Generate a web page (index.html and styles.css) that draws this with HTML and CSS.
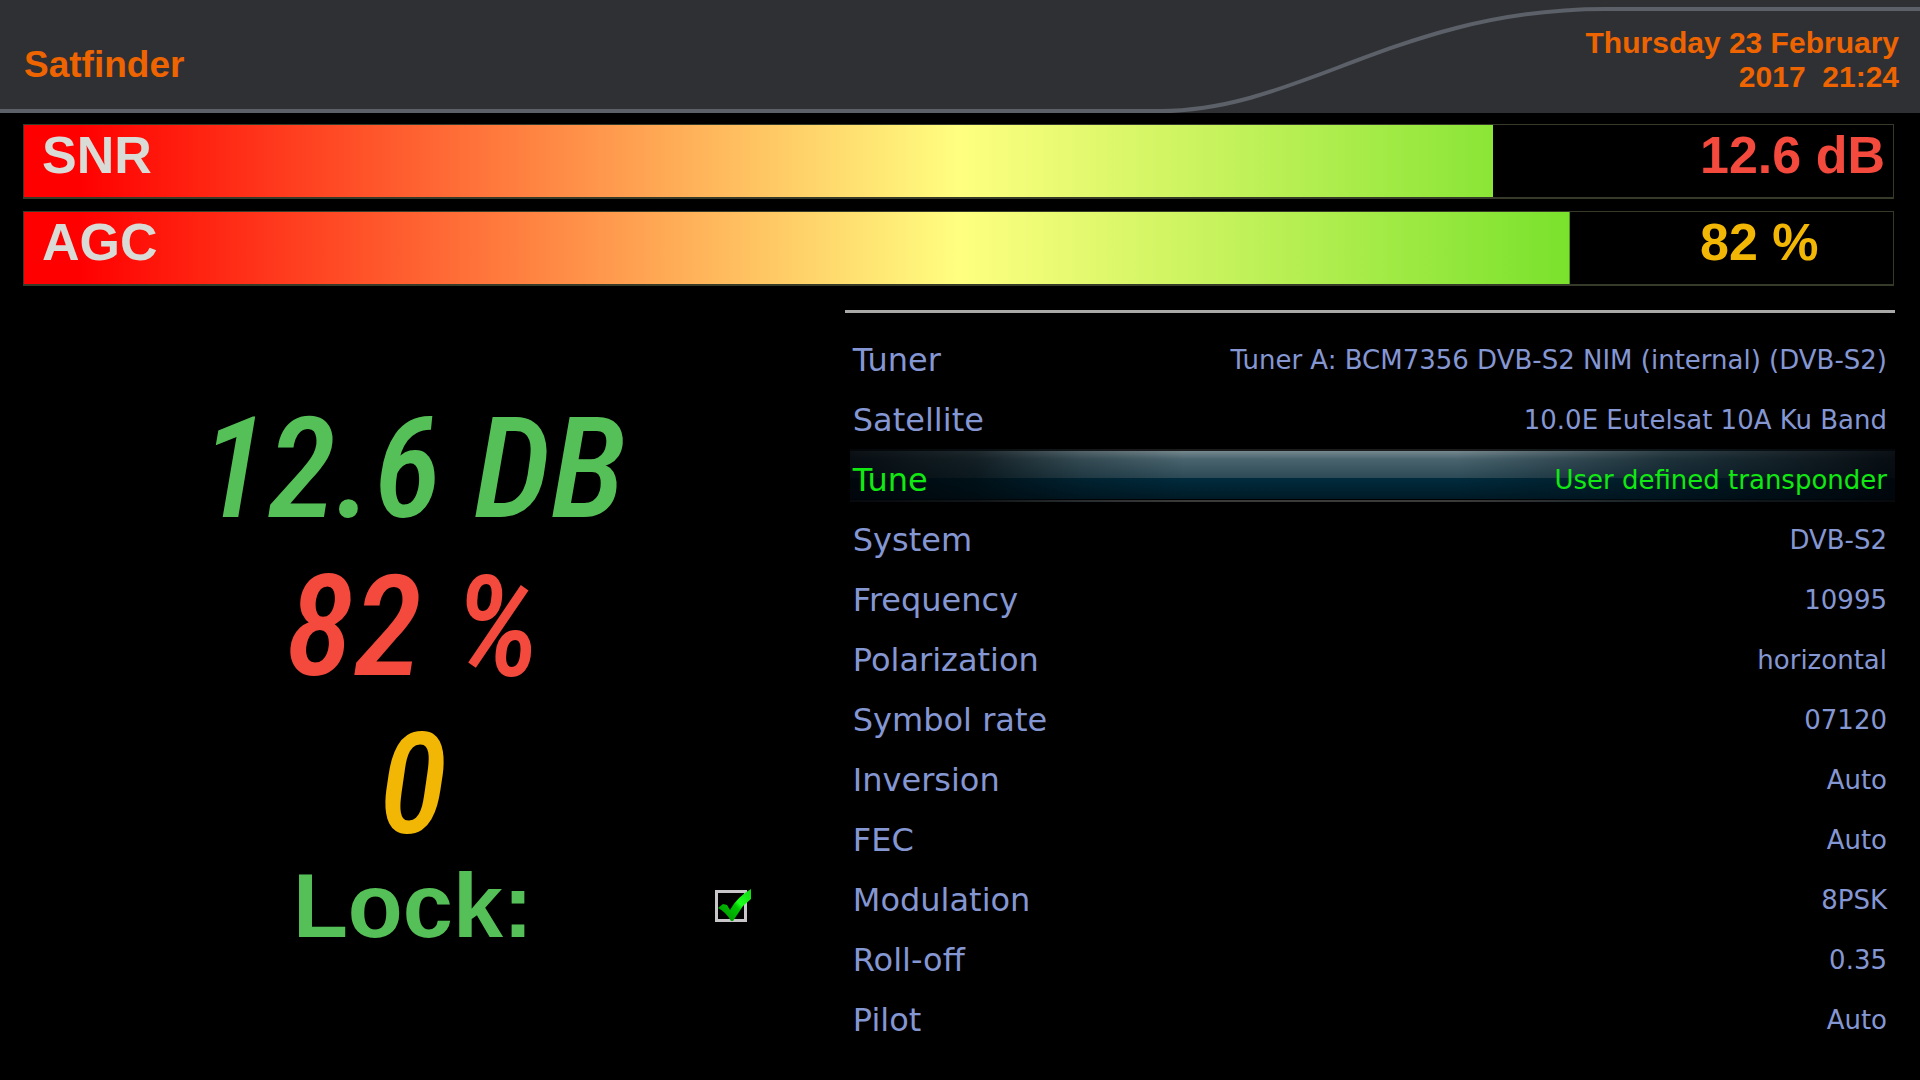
FILE: index.html
```html
<!DOCTYPE html>
<html lang="en">
<head>
  <meta charset="UTF-8">
  <meta name="viewport" content="width=device-width, initial-scale=1.0">
  <title>Satfinder</title>
  <link rel="stylesheet" href="styles.css">
</head>
<body>

  <header class="topbar">
    <svg class="topbar-curve" viewBox="0 0 1920 113" preserveAspectRatio="none" aria-hidden="true">
      <path d="M0 111 H1160 C1300 111 1400 9 1605 9 H1920" fill="none" stroke="#5c6068" stroke-width="4"/>
    </svg>
    <h1>Satfinder</h1>
    <p class="clock">Thursday 23 February 2017&nbsp; 21:24</p>
  </header>

  <section class="meters">
    <div class="meter">
      <div class="meter-fill" style="--level: 78.6%"></div>
      <span class="meter-name">SNR</span>
      <span class="meter-value red">12.6 dB</span>
    </div>
    <div class="meter">
      <div class="meter-fill" style="--level: 82.7%"></div>
      <span class="meter-name">AGC</span>
      <span class="meter-value amber">82 %</span>
    </div>
  </section>

  <main class="content">
    <section class="readout">
      <p class="lcd green">12.6 DB</p>
      <p class="lcd red">82 %</p>
      <p class="lcd amber">0</p>
      <div class="lock">
        <label for="lock">Lock:</label>
        <span class="lock-box">
          <input type="checkbox" id="lock" checked>
          <svg class="tick" viewBox="0 0 37 34" aria-hidden="true">
            <defs>
              <linearGradient id="tick-fill" x1="0" y1="1" x2="1" y2="0">
                <stop offset="0" stop-color="#008a00"/>
                <stop offset="0.5" stop-color="#00c400"/>
                <stop offset="0.6" stop-color="#1cff1c"/>
                <stop offset="1" stop-color="#10d810"/>
              </linearGradient>
            </defs>
            <path d="M3 20 L8 16 L12 17 L15 22 Q22 9 36 1 V11 L28 18 L22 27 L18 33 H16 Q11 24 3 20 Z" fill="url(#tick-fill)"/>
          </svg>
        </span>
      </div>
    </section>

    <section class="settings">
      <dl>
        <div class="row"><dt>Tuner</dt><dd>Tuner A: BCM7356 DVB-S2 NIM (internal) (DVB-S2)</dd></div>
        <div class="row"><dt>Satellite</dt><dd>10.0E Eutelsat 10A Ku Band</dd></div>
        <div class="row selected"><dt>Tune</dt><dd>User defined transponder</dd></div>
        <div class="row"><dt>System</dt><dd>DVB-S2</dd></div>
        <div class="row"><dt>Frequency</dt><dd>10995</dd></div>
        <div class="row"><dt>Polarization</dt><dd>horizontal</dd></div>
        <div class="row"><dt>Symbol rate</dt><dd>07120</dd></div>
        <div class="row"><dt>Inversion</dt><dd>Auto</dd></div>
        <div class="row"><dt>FEC</dt><dd>Auto</dd></div>
        <div class="row"><dt>Modulation</dt><dd>8PSK</dd></div>
        <div class="row"><dt>Roll-off</dt><dd>0.35</dd></div>
        <div class="row"><dt>Pilot</dt><dd>Auto</dd></div>
      </dl>
    </section>
  </main>

</body>
</html>
```

FILE: styles.css
```css
* {
  box-sizing: border-box;
}

body {
  margin: 0;
  background: #000;
  font-family: "Liberation Sans", Arial, sans-serif;
}

h1, p, dl, dd {
  margin: 0;
}

.green { color: #55c057; }
.red { color: #f4493d; }
.amber { color: #f2b705; }

/* Header */
.topbar {
  position: relative;
  display: flex;
  justify-content: space-between;
  align-items: flex-start;
  min-height: 113px;
  padding: 26px 21px 0 24px;
  background: #2f3034;
  color: #ee6400;
}

.topbar-curve {
  position: absolute;
  inset: 0;
  width: 100%;
  height: 100%;
}

.topbar h1 {
  position: relative;
  font-size: 37px;
  line-height: 78px;
}

.clock {
  position: relative;
  max-width: 330px;
  font-size: 30px;
  font-weight: bold;
  line-height: 34px;
  text-align: right;
}

/* Signal bars */
.meters {
  display: grid;
  gap: 12px;
  padding: 11px 26px 0 23px;
}

.meter {
  display: grid;
  grid-template-columns: 1fr 195px;
  height: 75px;
  border: 1px solid #363a28;
  border-bottom-width: 2px;
  font-size: 52px;
  font-weight: bold;
  line-height: 60px;
}

.meter > * {
  grid-row: 1;
}

.meter-fill {
  grid-column: 1 / -1;
  background: linear-gradient(90deg, #f00 3%, #ffff80 50%, #33d200 100%);
  clip-path: inset(0 calc(100% - var(--level)) 0 0);
}

.meter-name {
  grid-column: 1;
  z-index: 1;
  padding-left: 18px;
  color: #d9dcd6;
}

.meter-value {
  grid-column: 2;
  z-index: 1;
  padding-left: 2px;
}

/* Main area */
.content {
  display: grid;
  grid-template-columns: 439fr 561fr;
  padding: 24px 25px 0 23px;
}

.readout {
  padding: 80px 42px 0 0;
  text-align: center;
}

.lcd {
  font-family: "Roboto Condensed", Roboto, sans-serif;
  font-size: 140px;
  font-style: italic;
  font-weight: 500;
  line-height: 158px;
}

.lock {
  display: grid;
  grid-template-columns: 1fr auto 1fr;
  align-items: center;
}

.lock label {
  grid-column: 2;
  color: #55c057;
  font-size: 90px;
  font-weight: bold;
  line-height: 84px;
}

.lock-box {
  position: relative;
  display: flex;
  justify-self: end;
  margin-right: 56px;
}

.lock-box input {
  appearance: none;
  width: 32px;
  height: 32px;
  margin: 0;
  border: 3px solid #c9c6c9;
}

.tick {
  position: absolute;
  left: 0;
  bottom: 0;
  width: 37px;
  height: 34px;
  pointer-events: none;
}

/* Settings list */
.settings {
  border-top: 3px solid #a9a9a7;
  padding: 16px 0 0 5px;
}

.row {
  display: flex;
  justify-content: space-between;
  align-items: center;
  height: 60px;
  padding: 2px 8px 0 3px;
  color: #8597d3;
  font-family: "DejaVu Sans", Verdana, sans-serif;
}

.row dt {
  font-size: 32px;
}

.row dd {
  font-size: 26px;
}

.selected {
  color: #12e812;
  background:
    linear-gradient(90deg, rgba(0, 4, 8, 0.9) 0%, rgba(0, 8, 12, 0.75) 12%, rgba(0, 12, 18, 0.3) 22%, transparent 32%, transparent 58%, rgba(0, 16, 24, 0.6) 78%, rgba(0, 4, 8, 0.9) 100%),
    linear-gradient(#1c1c1c 2px, #76888e 2px, #4a646e 10px, #2c4a56 29px, #012c3e 29px, #001a26 50px, #000 50px, #000 51px, #3a3a3a 51px);
  background-size: 100% 53px;
  background-repeat: no-repeat;
}
```
